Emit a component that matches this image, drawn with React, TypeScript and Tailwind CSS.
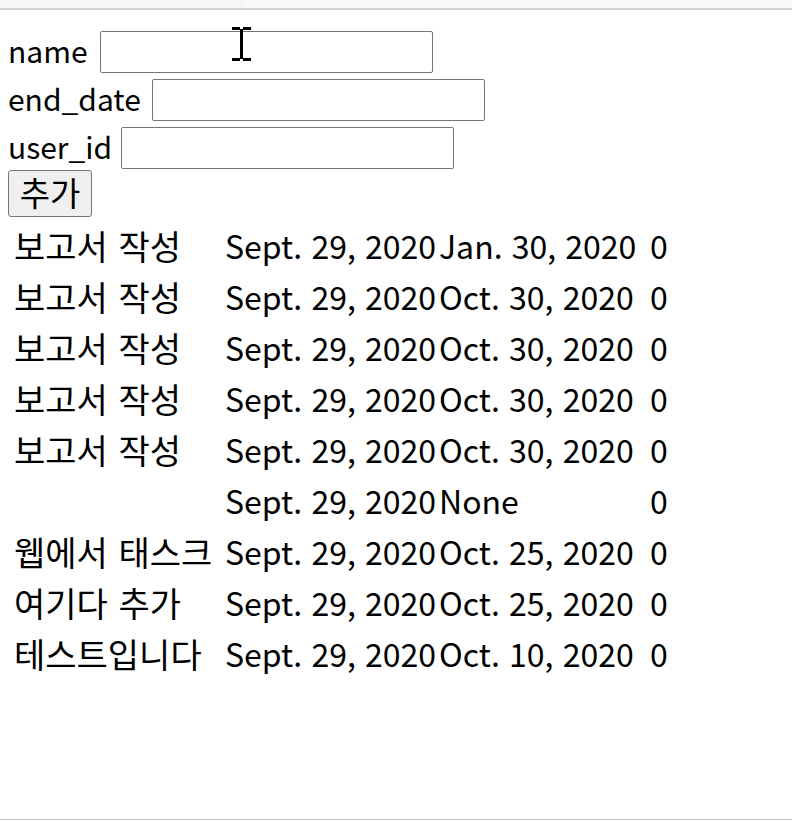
import React from "react";

const rows: [string, string, string, string][] = [
  ["보고서 작성", "Sept. 29, 2020", "Jan. 30, 2020", "0"],
  ["보고서 작성", "Sept. 29, 2020", "Oct. 30, 2020", "0"],
  ["보고서 작성", "Sept. 29, 2020", "Oct. 30, 2020", "0"],
  ["보고서 작성", "Sept. 29, 2020", "Oct. 30, 2020", "0"],
  ["보고서 작성", "Sept. 29, 2020", "Oct. 30, 2020", "0"],
  ["", "Sept. 29, 2020", "None", "0"],
  ["웹에서 태스크", "Sept. 29, 2020", "Oct. 25, 2020", "0"],
  ["여기다 추가", "Sept. 29, 2020", "Oct. 25, 2020", "0"],
  ["테스트입니다", "Sept. 29, 2020", "Oct. 10, 2020", "0"],
];

function Field({ label, w }: { label: string; w: string }) {
  return (
    <div className="flex h-[48px] items-start">
      <span className={`${w} shrink-0 pt-[1px] text-[30px] leading-[42px]`}>{label}</span>
      <input
        type="text"
        className="mt-[3px] h-[42px] w-[333px] rounded-[2px] border border-[#767676] bg-white outline-none"
      />
    </div>
  );
}

export default function App() {
  return (
    <div className="relative flex h-[820px] w-full flex-col overflow-hidden bg-white text-[32px] text-black font-['Noto_Sans_CJK_KR','Noto_Sans',sans-serif]">
      {/* top chrome strip */}
      <div className="flex h-[8px] w-full">
        <div className="h-full w-[245px] bg-[#f6f6f6]" />
        <div className="h-full flex-1 bg-[#f8f8f8]" />
      </div>
      <div className="h-[2px] w-full bg-[#d3d3d3]" />

      <div className="flex flex-col pl-[8px] pt-[18px]">
        <Field label="name" w="w-[92px]" />
        <Field label="end_date" w="w-[144px]" />
        <Field label="user_id" w="w-[113px]" />
        <div className="-mt-[2px]">
          <button className="flex h-[47px] w-[84px] items-center justify-center rounded-[3px] border border-[#767676] bg-[#efefef] pb-[2px] text-[33px] leading-none">
            추가
          </button>
        </div>
      </div>

      <div className="mt-[3px] flex flex-col pl-[14px]">
        {rows.map((r, i) => (
          <div
            key={i}
            className="grid h-[51px] grid-cols-[211px_214px_211px_1fr] items-center leading-[51px] whitespace-nowrap"
          >
            <span className="text-[34px] [word-spacing:3px]">{r[0]}</span>
            <span className="[word-spacing:2px]">{r[1]}</span>
            <span className="[word-spacing:2px]">{r[2]}</span>
            <span>{r[3]}</span>
          </div>
        ))}
      </div>

      <div className="flex-1" />
      <div className="h-[1px] w-full bg-[#c1c1c1]" />

      {/* text cursor (I-beam) over the name input */}
      <svg
        className="absolute left-[232px] top-[27px]"
        width="20"
        height="35"
        viewBox="0 0 20 35"
      >
        <rect x="0" y="0" width="8" height="3" fill="#000" />
        <rect x="11" y="0" width="8" height="3" fill="#000" />
        <rect x="8" y="2" width="3" height="30" fill="#000" />
        <rect x="0" y="31" width="8" height="3" fill="#000" />
        <rect x="11" y="31" width="8" height="3" fill="#000" />
      </svg>
    </div>
  );
}
